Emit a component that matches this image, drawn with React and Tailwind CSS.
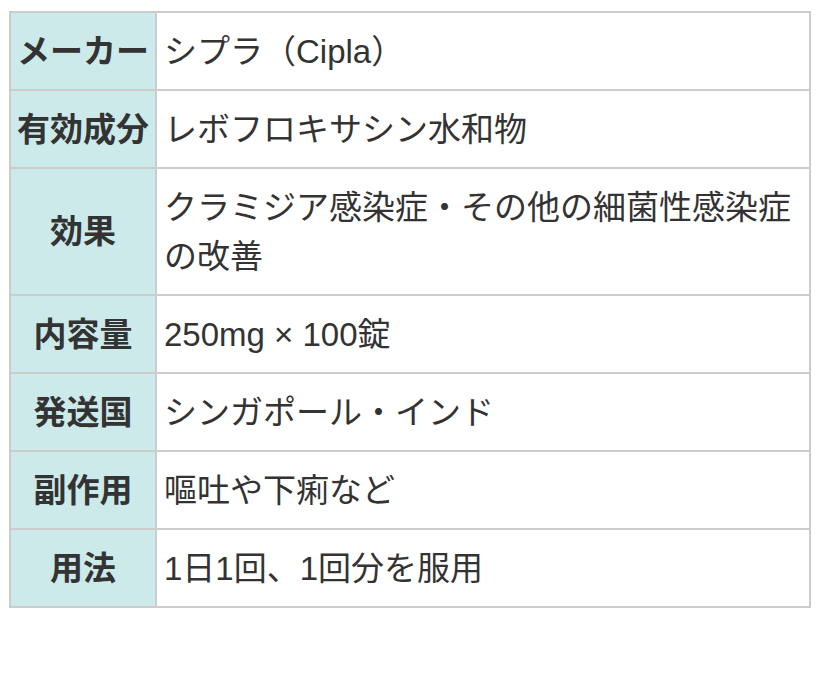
import React from "react";

const rows = [
  { label: "メーカー", value: "シプラ（Cipla）" },
  { label: "有効成分", value: "レボフロキサシン水和物" },
  { label: "効果", value: "クラミジア感染症・その他の細菌性感染症の改善" },
  { label: "内容量", value: "250mg × 100錠" },
  { label: "発送国", value: "シンガポール・インド" },
  { label: "副作用", value: "嘔吐や下痢など" },
  { label: "用法", value: "1日1回、1回分を服用" },
];

export default function App() {
  return (
    <div
      className="bg-white w-[820px] h-[683px] pt-[11px] pl-[9px] text-[#333]"
      style={{ fontFamily: '"Liberation Sans", "Noto Sans CJK JP", sans-serif' }}
    >
      <table className="w-[802px] border-collapse border-2 border-[#ccc] text-[33px] leading-[49px]">
        <tbody>
          {rows.map((row) => (
            <tr key={row.label}>
              <th className="w-[146px] bg-[#cdeaea] border-2 border-[#ccc] px-0 py-[13.5px] font-bold text-center whitespace-nowrap">
                {row.label}
              </th>
              <td className="border-2 border-[#ccc] pl-[7px] pr-2 py-[13.5px] text-left">
                {row.value}
              </td>
            </tr>
          ))}
        </tbody>
      </table>
    </div>
  );
}
